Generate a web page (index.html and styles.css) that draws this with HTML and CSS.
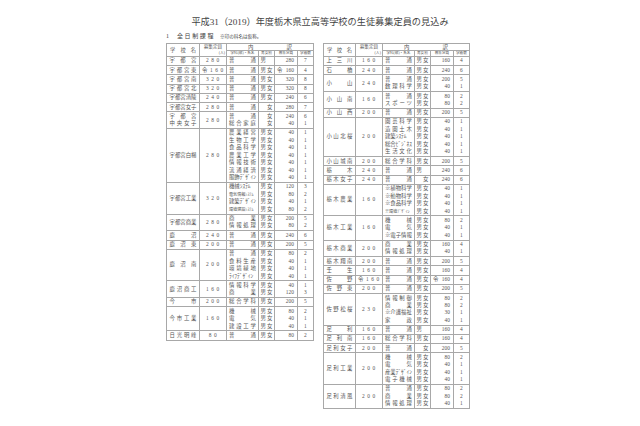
FILE: index.html
```html
<!DOCTYPE html>
<html lang="ja">
<head>
<meta charset="utf-8">
<title>平成31（2019）年度栃木県立高等学校の生徒募集定員の見込み</title>
<link rel="stylesheet" href="styles.css">
</head>
<body>
<div class="page">
  <h1 class="title">平成31（2019）年度栃木県立高等学校の生徒募集定員の見込み</h1>
  <div class="section"><span class="num">1</span><span class="course">全日制課程</span><span class="note">※印の科名は仮称。</span></div>
  <div class="tables">
    <table class="tbl">
      <colgroup><col class="c-nm"><col class="c-cap"><col class="c-sb"><col class="c-sx"><col class="c-ct"><col class="c-cl"></colgroup>
      <thead>
        <tr class="h1"><th class="nm j hn" rowspan="2">学校名</th><th class="hcap" rowspan="2"><div class="hc1">募集定員</div><div class="hc2">(人)</div></th><th class="j uchi" colspan="4">内訳</th></tr>
        <tr class="h2"><th class="hs">学科(部)・系名</th><th class="hs">男女別</th><th class="hs">募集定員</th><th class="hs">学級数</th></tr>
      </thead>
      <tbody>
        <tr><td class="nm j">宇都宮</td><td class="cap">280</td><td class="sb j">普通</td><td class="sx"><div class="m">男</div></td><td class="ct">280</td><td class="cl">7</td></tr>
        <tr><td class="nm j">宇都宮東</td><td class="cap">令160</td><td class="sb j">普通</td><td class="sx j">男女</td><td class="ct j">令 160</td><td class="cl">4</td></tr>
        <tr><td class="nm j">宇都宮南</td><td class="cap">320</td><td class="sb j">普通</td><td class="sx j">男女</td><td class="ct">320</td><td class="cl">8</td></tr>
        <tr><td class="nm j">宇都宮北</td><td class="cap">320</td><td class="sb j">普通</td><td class="sx j">男女</td><td class="ct">320</td><td class="cl">8</td></tr>
        <tr><td class="nm j">宇都宮清陵</td><td class="cap">240</td><td class="sb j">普通</td><td class="sx j">男女</td><td class="ct">240</td><td class="cl">6</td></tr>
        <tr><td class="nm j">宇都宮女子</td><td class="cap">280</td><td class="sb j">普通</td><td class="sx"><div class="f">女</div></td><td class="ct">280</td><td class="cl">7</td></tr>
        <tr><td class="nm j"><div>宇都宮</div><div>中央女子</div></td><td class="cap">280</td><td class="sb j"><div>普通</div><div>総合家庭</div></td><td class="sx"><div class="f">女</div><div class="f">女</div></td><td class="ct"><div>240</div><div>40</div></td><td class="cl"><div>6</div><div>1</div></td></tr>
        <tr><td class="nm j">宇都宮白楊</td><td class="cap">280</td><td class="sb j"><div>農業経営</div><div>生物工学</div><div>食品科学</div><div>農業工学</div><div>情報技術</div><div>流通経済</div><div>服飾ﾃﾞｻﾞｲﾝ</div></td><td class="sx j"><div>男女</div><div>男女</div><div>男女</div><div>男女</div><div>男女</div><div>男女</div><div>男女</div></td><td class="ct"><div>40</div><div>40</div><div>40</div><div>40</div><div>40</div><div>40</div><div>40</div></td><td class="cl"><div>1</div><div>1</div><div>1</div><div>1</div><div>1</div><div>1</div><div>1</div></td></tr>
        <tr><td class="nm j">宇都宮工業</td><td class="cap">320</td><td class="sb"><div>機械ｼｽﾃﾑ</div><div class="sm">電気情報ｼｽﾃﾑ</div><div>建築ﾃﾞｻﾞｲﾝ</div><div class="sm">環境建設ｼｽﾃﾑ</div></td><td class="sx j"><div>男女</div><div>男女</div><div>男女</div><div>男女</div></td><td class="ct"><div>120</div><div>80</div><div>40</div><div>80</div></td><td class="cl"><div>3</div><div>2</div><div>1</div><div>2</div></td></tr>
        <tr><td class="nm j">宇都宮商業</td><td class="cap">280</td><td class="sb j"><div>商業</div><div>情報処理</div></td><td class="sx j"><div>男女</div><div>男女</div></td><td class="ct"><div>200</div><div>80</div></td><td class="cl"><div>5</div><div>2</div></td></tr>
        <tr><td class="nm j">鹿沼</td><td class="cap">240</td><td class="sb j">普通</td><td class="sx j">男女</td><td class="ct">240</td><td class="cl">6</td></tr>
        <tr><td class="nm j">鹿沼東</td><td class="cap">200</td><td class="sb j">普通</td><td class="sx j">男女</td><td class="ct">200</td><td class="cl">5</td></tr>
        <tr><td class="nm j">鹿沼南</td><td class="cap">200</td><td class="sb j"><div>普通</div><div>食料生産</div><div>環境緑地</div><div class="nj">ﾗｲﾌﾃﾞｻﾞｲﾝ</div></td><td class="sx j"><div>男女</div><div>男女</div><div>男女</div><div>男女</div></td><td class="ct"><div>80</div><div>40</div><div>40</div><div>40</div></td><td class="cl"><div>2</div><div>1</div><div>1</div><div>1</div></td></tr>
        <tr><td class="nm j">鹿沼商工</td><td class="cap">160</td><td class="sb j"><div>情報科学</div><div>商業</div></td><td class="sx j"><div>男女</div><div>男女</div></td><td class="ct"><div>40</div><div>120</div></td><td class="cl"><div>1</div><div>3</div></td></tr>
        <tr><td class="nm j">今市</td><td class="cap">200</td><td class="sb j">総合学科</td><td class="sx j">男女</td><td class="ct">200</td><td class="cl">5</td></tr>
        <tr><td class="nm j">今市工業</td><td class="cap">160</td><td class="sb j"><div>機械</div><div>電気</div><div>建設工学</div></td><td class="sx j"><div>男女</div><div>男女</div><div>男女</div></td><td class="ct"><div>80</div><div>40</div><div>40</div></td><td class="cl"><div>2</div><div>1</div><div>1</div></td></tr>
        <tr><td class="nm j">日光明峰</td><td class="cap">80</td><td class="sb j">普通</td><td class="sx j">男女</td><td class="ct">80</td><td class="cl">2</td></tr>
      </tbody>
    </table>

    <table class="tbl">
      <colgroup><col class="c-nm"><col class="c-cap"><col class="c-sb"><col class="c-sx"><col class="c-ct"><col class="c-cl"></colgroup>
      <thead>
        <tr class="h1"><th class="nm j hn" rowspan="2">学校名</th><th class="hcap" rowspan="2"><div class="hc1">募集定員</div><div class="hc2">(人)</div></th><th class="j uchi" colspan="4">内訳</th></tr>
        <tr class="h2"><th class="hs">学科(部)・系名</th><th class="hs">男女別</th><th class="hs">募集定員</th><th class="hs">学級数</th></tr>
      </thead>
      <tbody>
        <tr><td class="nm j">上三川</td><td class="cap">160</td><td class="sb j">普通</td><td class="sx j">男女</td><td class="ct">160</td><td class="cl">4</td></tr>
        <tr><td class="nm j">石橋</td><td class="cap">240</td><td class="sb j">普通</td><td class="sx j">男女</td><td class="ct">240</td><td class="cl">6</td></tr>
        <tr><td class="nm j">小山</td><td class="cap">240</td><td class="sb j"><div>普通</div><div>数理科学</div></td><td class="sx j"><div>男女</div><div>男女</div></td><td class="ct"><div>200</div><div>40</div></td><td class="cl"><div>5</div><div>1</div></td></tr>
        <tr><td class="nm j">小山南</td><td class="cap">160</td><td class="sb j"><div>普通</div><div>スポーツ</div></td><td class="sx j"><div>男女</div><div>男女</div></td><td class="ct"><div>80</div><div>80</div></td><td class="cl"><div>2</div><div>2</div></td></tr>
        <tr><td class="nm j">小山西</td><td class="cap">200</td><td class="sb j">普通</td><td class="sx j">男女</td><td class="ct">200</td><td class="cl">5</td></tr>
        <tr><td class="nm j">小山北桜</td><td class="cap">200</td><td class="sb j"><div>園芸科学</div><div>造園土木</div><div class="nj">建築ｼｽﾃﾑ</div><div class="nj">総合ﾋﾞｼﾞﾈｽ</div><div>生活文化</div></td><td class="sx j"><div>男女</div><div>男女</div><div>男女</div><div>男女</div><div>男女</div></td><td class="ct"><div>40</div><div>40</div><div>40</div><div>40</div><div>40</div></td><td class="cl"><div>1</div><div>1</div><div>1</div><div>1</div><div>1</div></td></tr>
        <tr><td class="nm j">小山城南</td><td class="cap">200</td><td class="sb j">総合学科</td><td class="sx j">男女</td><td class="ct">200</td><td class="cl">5</td></tr>
        <tr><td class="nm j">栃木</td><td class="cap">240</td><td class="sb j">普通</td><td class="sx"><div class="m">男</div></td><td class="ct">240</td><td class="cl">6</td></tr>
        <tr><td class="nm j">栃木女子</td><td class="cap">240</td><td class="sb j">普通</td><td class="sx"><div class="f">女</div></td><td class="ct">240</td><td class="cl">6</td></tr>
        <tr><td class="nm j">栃木農業</td><td class="cap">160</td><td class="sb"><div>※植物科学</div><div>※動物科学</div><div>※食品科学</div><div class="sm">※環境ﾃﾞｻﾞｲﾝ</div></td><td class="sx j"><div>男女</div><div>男女</div><div>男女</div><div>男女</div></td><td class="ct"><div>40</div><div>40</div><div>40</div><div>40</div></td><td class="cl"><div>1</div><div>1</div><div>1</div><div>1</div></td></tr>
        <tr><td class="nm j">栃木工業</td><td class="cap">160</td><td class="sb j"><div>機械</div><div>電気</div><div>※電子情報</div></td><td class="sx j"><div>男女</div><div>男女</div><div>男女</div></td><td class="ct"><div>80</div><div>40</div><div>40</div></td><td class="cl"><div>2</div><div>1</div><div>1</div></td></tr>
        <tr><td class="nm j">栃木商業</td><td class="cap">200</td><td class="sb j"><div>商業</div><div>情報処理</div></td><td class="sx j"><div>男女</div><div>男女</div></td><td class="ct"><div>160</div><div>40</div></td><td class="cl"><div>4</div><div>1</div></td></tr>
        <tr><td class="nm j">栃木翔南</td><td class="cap">200</td><td class="sb j">普通</td><td class="sx j">男女</td><td class="ct">200</td><td class="cl">5</td></tr>
        <tr><td class="nm j">壬生</td><td class="cap">160</td><td class="sb j">普通</td><td class="sx j">男女</td><td class="ct">160</td><td class="cl">4</td></tr>
        <tr><td class="nm j">佐野</td><td class="cap">令160</td><td class="sb j">普通</td><td class="sx j">男女</td><td class="ct j">令 160</td><td class="cl">4</td></tr>
        <tr><td class="nm j">佐野東</td><td class="cap">200</td><td class="sb j">普通</td><td class="sx j">男女</td><td class="ct">200</td><td class="cl">5</td></tr>
        <tr><td class="nm j">佐野松桜</td><td class="cap">230</td><td class="sb j"><div>情報制御</div><div>商業</div><div>※介護福祉</div><div>家政</div></td><td class="sx j"><div>男女</div><div>男女</div><div>男女</div><div>男女</div></td><td class="ct"><div>80</div><div>80</div><div>30</div><div>40</div></td><td class="cl"><div>2</div><div>2</div><div>1</div><div>1</div></td></tr>
        <tr><td class="nm j">足利</td><td class="cap">160</td><td class="sb j">普通</td><td class="sx"><div class="m">男</div></td><td class="ct">160</td><td class="cl">4</td></tr>
        <tr><td class="nm j">足利南</td><td class="cap">160</td><td class="sb j">総合学科</td><td class="sx j">男女</td><td class="ct">160</td><td class="cl">4</td></tr>
        <tr><td class="nm j">足利女子</td><td class="cap">200</td><td class="sb j">普通</td><td class="sx"><div class="f">女</div></td><td class="ct">200</td><td class="cl">5</td></tr>
        <tr><td class="nm j">足利工業</td><td class="cap">200</td><td class="sb j"><div>機械</div><div>電気</div><div class="nj">産業ﾃﾞｻﾞｲﾝ</div><div>電子機械</div></td><td class="sx j"><div>男女</div><div>男女</div><div>男女</div><div>男女</div></td><td class="ct"><div>80</div><div>40</div><div>40</div><div>40</div></td><td class="cl"><div>2</div><div>1</div><div>1</div><div>1</div></td></tr>
        <tr><td class="nm j">足利清風</td><td class="cap">200</td><td class="sb j"><div>普通</div><div>商業</div><div>情報処理</div></td><td class="sx j"><div>男女</div><div>男女</div><div>男女</div></td><td class="ct"><div>80</div><div>80</div><div>40</div></td><td class="cl"><div>2</div><div>2</div><div>1</div></td></tr>
      </tbody>
    </table>
  </div>
</div>
</body>
</html>
```

FILE: styles.css
```css
html, body {
  margin: 0;
  padding: 0;
  background: #ffffff;
}

body {
  color: #555555;
  font-family: "Liberation Serif", "Noto Sans CJK JP", serif;
}

.page {
  width: 640px;
  height: 426px;
  overflow: hidden;
}

.title {
  margin: 17px 0 0 0;
  text-align: center;
  font-size: 9.2px;
  line-height: 11px;
  font-weight: normal;
  color: #444444;
}

.section {
  margin: 5px 0 0 166px;
  display: flex;
  align-items: baseline;
  font-size: 6px;
  line-height: 7px;
  color: #444444;
}

.section .num {
  margin-right: 8px;
}

.section .course {
  letter-spacing: 1.6px;
  margin-right: 5px;
}

.section .note {
  font-size: 4.6px;
}

.tables {
  display: flex;
  align-items: flex-start;
  gap: 9px;
  margin: 3px 0 0 166px;
}

.tbl {
  border-collapse: collapse;
  table-layout: fixed;
  border: 1.6px solid #333333;
  font-size: 5.4px;
  line-height: 7.45px;
  color: #555555;
}

.c-nm { width: 32px; }
.c-cap { width: 27px; }
.c-sb { width: 31px; }
.c-sx { width: 16px; }
.c-ct { width: 23px; }
.c-cl { width: 16px; }

.tbl td,
.tbl th {
  border: 1px solid #a8a8a8;
  padding: 0.4px 2px;
  vertical-align: middle;
  font-weight: normal;
  white-space: nowrap;
  overflow: hidden;
}

.j {
  text-align: justify;
  text-align-last: justify;
}

.tbl .nm {
  padding: 0.4px 2.5px;
}

.tbl .cap {
  text-align: center;
  letter-spacing: 2.6px;
  padding: 0.4px 0 0.4px 2px;
}

.tbl .ct {
  text-align: right;
  padding-right: 3px;
}

.tbl .cl {
  text-align: center;
}

.tbl .sx {
  padding: 0.4px 1.5px;
}

.m {
  text-align: left;
  text-align-last: left;
}

.f {
  text-align: right;
  text-align-last: right;
}

.nj {
  text-align: left;
  text-align-last: left;
}

.sm {
  font-size: 4.1px;
}

.tbl .h1 th {
  height: 6px;
  line-height: 6px;
}

.tbl .hn {
  padding: 0 3px;
  font-size: 5.2px;
}

.tbl .hcap {
  padding: 0 1px;
  font-size: 4.6px;
  line-height: 5.5px;
}

.hc1 {
  text-align: center;
}

.hc2 {
  text-align: right;
  font-size: 3.8px;
}

.tbl .uchi {
  padding: 0 21px;
  font-size: 5.4px;
}

.tbl .h2 th {
  height: 5px;
  line-height: 5px;
}

.tbl .hs {
  font-size: 3.6px;
  padding: 0 0.5px;
  text-align: center;
}
```
